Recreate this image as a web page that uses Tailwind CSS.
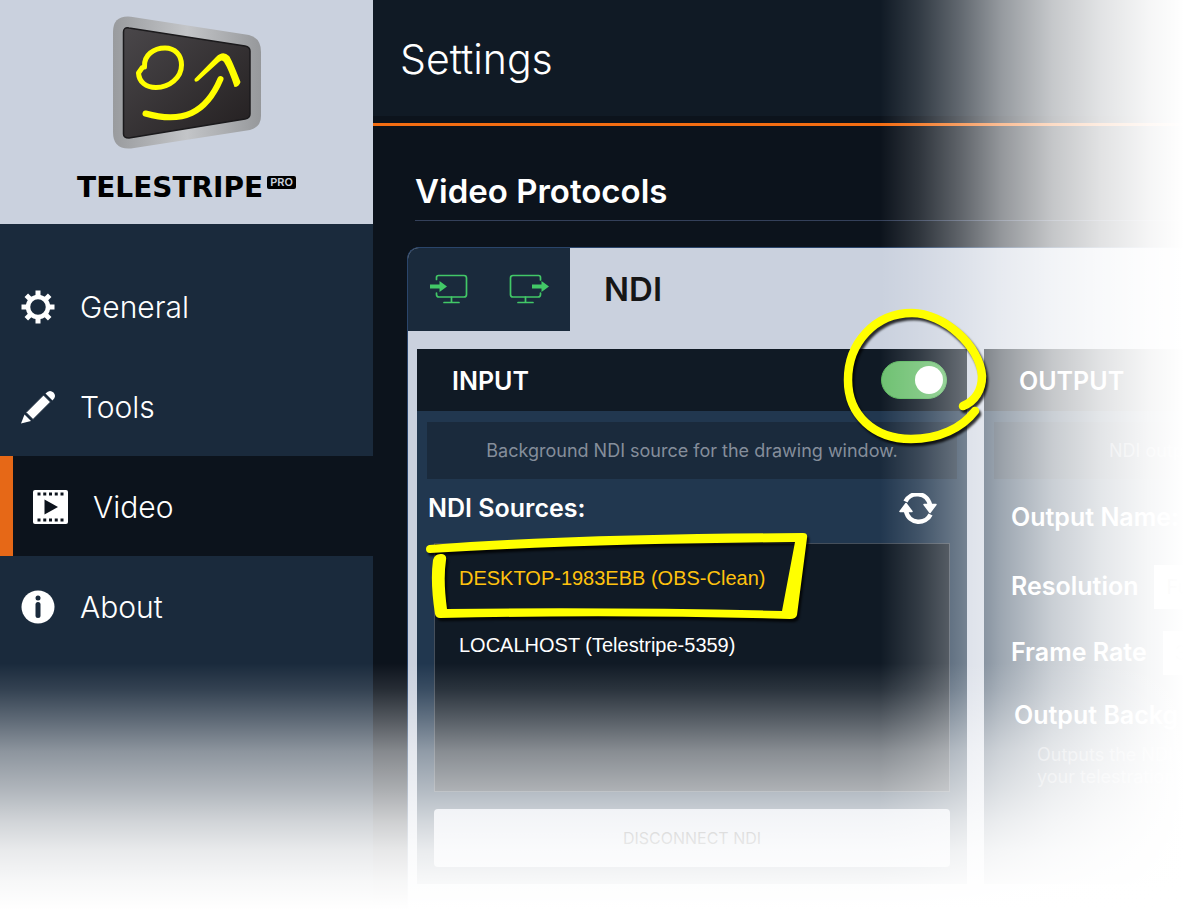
<!DOCTYPE html>
<html lang="en">
<head>
    <meta charset="UTF-8">
    <meta name="viewport" content="width=device-width, initial-scale=1.0">
    <title>Telestripe Pro - Settings</title>
    <script src="https://cdn.jsdelivr.net/npm/@tailwindcss/browser@4"></script>
</head>
<body class="bg-white">
<div class="relative flex h-screen overflow-hidden bg-[#0c131c] font-['Inter',sans-serif] text-white">

    <!-- Sidebar -->
    <aside class="w-[373px] shrink-0 bg-[#1a2a3c]">
        <div class="flex h-[224px] flex-col items-center bg-[#cad1de] pt-4">
            <svg class="h-[134px] w-[150px]" viewBox="112 16 150 134" fill="none" role="img" aria-label="Telestripe logo">
                <defs>
                    <linearGradient id="frame" x1="0" y1="0" x2="1" y2="0">
                        <stop offset="0" stop-color="#999b9e"/>
                        <stop offset=".5" stop-color="#c3c5c8"/>
                        <stop offset="1" stop-color="#96989b"/>
                    </linearGradient>
                    <linearGradient id="screen" x1="0" y1="0" x2="1" y2="1">
                        <stop offset="0" stop-color="#4a474a"/>
                        <stop offset="1" stop-color="#231f20"/>
                    </linearGradient>
                </defs>
                <path d="M113 32Q113 15 131 16.700L249 35Q261 38 261 52V116Q261 127 250 130L131 148.500Q113 150 113 132Z" fill="url(#frame)"/>
                <path d="M123.500 32Q123.500 27 129 28L245 46Q250 47 250 51V114Q250 118 245 119L129 138Q123.500 138 123.500 134Z" fill="url(#screen)" stroke="#1b1a1c" stroke-width="1.500"/>
                <g stroke="#ffff00" stroke-linejoin="round" stroke-linecap="round">
                    <path d="M144.500 67C143.500 55 154 48 165 48C175 48 181.500 55 181.500 65C181.500 78 169 87.500 156 87.500C146 87.500 139 82 138.500 73L142 68" stroke-width="5"/>
                    <path d="M145.500 113.500C183 124 206 113 220.500 79" stroke-width="6"/>
                </g>
                <path d="M194.500 79L216 57Q223 50 229 56Q231 58 240.500 82Q239 87 234.500 87Q229 70 224 62Q222 59 219 62L198 81Q194 83 194.500 79Z" fill="#ffff00"/>
            </svg>
            <div class="mt-[22px] flex items-start gap-1 text-black">
                <span class="font-['DejaVu_Sans',sans-serif] text-[28px] leading-8 font-bold">TELESTRIPE</span>
                <span class="mt-1 rounded-xs bg-black px-[3px] text-[11px] leading-[13px] font-semibold text-[#cad1de]">PRO</span>
            </div>
        </div>
        <nav class="pt-8 text-[30px] font-light">
            <a href="#general" class="flex h-[100px] items-center gap-6 pt-[3px] pl-5">
                <svg class="size-9" viewBox="0 0 36 36" fill="none" stroke="#fff">
                    <circle cx="18" cy="17" r="10" stroke-width="4.500"/>
                    <path d="M18 .500v6M18 27.500v6M1.500 17h6M28.500 17h6M6.300 5.300l4 4M25.700 24.700l4 4M6.300 28.700l4-4M25.700 9.300l4-4" stroke-width="5"/>
                </svg>
                General
            </a>
            <a href="#tools" class="flex h-[100px] items-center gap-6 pt-[3px] pl-5">
                <svg class="size-9" viewBox="0 0 36 36" fill="#fff">
                    <path d="M1 33.500L4.500 24.500L11 31Z"/>
                    <path d="M6 22.500L23.500 5L30.500 12L13 29.500Z" stroke="#1a2a3c" stroke-width="1"/>
                    <path d="M25.500 3.500Q29.500-1 33.500 2.500Q37 6.500 32.500 10.500Z"/>
                </svg>
                Tools
            </a>
            <a href="#video" aria-current="page" class="flex h-[100px] items-center gap-6 border-l-[13px] border-[#e66817] bg-[#0c131c] pt-[3px] pl-5">
                <svg class="size-9" viewBox="0 0 36 36">
                    <rect y="0" width="35" height="34" rx="2" fill="#fff"/>
                    <path d="M4.500 4h26M4.500 30h26" stroke="#0c131c" stroke-width="3" stroke-dasharray="3 2.750"/>
                    <path d="M11.500 9.500L25 17L11.500 24.500Z" fill="#0c131c"/>
                </svg>
                Video
            </a>
            <a href="#about" class="flex h-[100px] items-center gap-6 pt-[3px] pl-5">
                <svg class="size-9" viewBox="0 0 36 36">
                    <circle cx="18" cy="17" r="16.500" fill="#fff"/>
                    <circle cx="18" cy="8" r="2.500" fill="#1a2a3c"/>
                    <path d="M18 14.500v11" stroke="#1a2a3c" stroke-width="5" stroke-linecap="round"/>
                </svg>
                About
            </a>
        </nav>
    </aside>

    <!-- Main -->
    <main class="min-w-0 flex-1">
        <header class="h-[126px] border-b-3 border-[#f46d12]">
            <div class="flex h-[116px] items-center bg-[#101a25] px-[27px] pt-1">
                <h1 class="text-[41px] font-light">Settings</h1>
            </div>
        </header>

        <h2 class="mt-10 ml-[42px] border-b border-[#34405a] pb-1 text-[33px] leading-[50px] font-semibold">Video Protocols</h2>

        <section class="mt-[26px] ml-[34px] overflow-hidden rounded-tl-xl border-t border-l border-[#2a456b] bg-[#cad1de] pb-10">
            <div class="flex h-[83px]">
                <div class="flex w-[162px] items-center justify-center gap-10 bg-[#1a2a3c] pb-[2px]">
                    <svg class="h-8 w-10" viewBox="0 0 40 32" fill="none" stroke="#42c867" stroke-width="1.700" stroke-linecap="round">
                        <path d="M7.500 6.500V4.500Q7.500 2.500 9.500 2.500H35Q37.500 2.500 37.500 5V21.500Q37.500 24 35 24H10Q7.500 24 7.500 21.500V20"/>
                        <path d="M22.500 24v5M15 29.500h15"/>
                        <path d="M1 11.500h9.500V8L18 13.500L10.500 19V15.500H1Z" fill="#42c867" stroke="none"/>
                    </svg>
                    <svg class="h-8 w-10" viewBox="0 0 40 32" fill="none" stroke="#42c867" stroke-width="1.700" stroke-linecap="round">
                        <path d="M31.500 7V4.500Q31.500 2.500 29.500 2.500H4Q1.500 2.500 1.500 5V21.500Q1.500 24 4 24H29Q31.500 24 31.500 21.500V20"/>
                        <path d="M16.500 24v5M9 29.500h15"/>
                        <path d="M23 11.500h9.500V8L40 13.500L32.500 19V15.500H23Z" fill="#42c867" stroke="none"/>
                    </svg>
                </div>
                <h3 class="flex items-center px-[34px] text-[33px] font-semibold text-[#161616]">NDI</h3>
            </div>

            <div class="mt-[18px] ml-[9px] flex h-[535px] gap-[17px]">
                <!-- Input -->
                <div class="w-[550px] shrink-0 bg-[#21374f]">
                    <div class="flex h-[62px] items-center justify-between bg-[#101a25] pr-5 pl-[35px] text-[25px] font-semibold">
                        <label for="ndiInput" class="pt-1">INPUT</label>
                        <input type="checkbox" id="ndiInput" checked class="flex h-[38px] w-[66px] appearance-none items-center justify-end rounded-full border border-[#5cb860] bg-[#6fc172] px-[3px] before:size-7 before:rounded-full before:bg-white">
                    </div>
                    <p class="mx-[10px] mt-[11px] flex h-[57px] items-center justify-center bg-[#1a2a3c] text-lg text-[#858e9b]">Background NDI source for the drawing window.</p>
                    <div class="flex h-16 items-center justify-between pr-[30px] pb-1 pl-[11px]">
                        <h4 class="text-[25px] font-semibold">NDI Sources:</h4>
                        <button type="button" aria-label="Refresh sources">
                            <svg class="h-8 w-[38px]" viewBox="0 0 38 32" fill="none" stroke="#fff" stroke-width="4.500">
                                <path d="M6.500 8.500C11-1.500 28-2 31 12"/>
                                <path d="M31.500 21.500C27 31.500 10 32 7 18"/>
                                <path d="M25 11.500L37 11.500L31 19.500ZM1 18.500H13L7 10.500Z" fill="#fff" stroke="#fff" stroke-width="1.500" stroke-linejoin="round"/>
                            </svg>
                        </button>
                    </div>
                    <ul class="mx-[17px] h-[249px] border border-[#454f5b] bg-[#101a25] pt-px font-['Liberation_Sans',sans-serif] text-[20px] leading-[67px]">
                        <li class="pl-6 text-[#ffc20e]">DESKTOP-1983EBB (OBS-Clean)</li>
                        <li class="pl-6">LOCALHOST (Telestripe-5359)</li>
                    </ul>
                    <div class="mx-[17px] mt-[17px]">
                        <button type="button" class="h-[58px] w-full rounded bg-[#cad1de] text-base text-[#333]">DISCONNECT NDI</button>
                    </div>
                </div>

                <!-- Output -->
                <div class="min-w-0 flex-1 overflow-hidden bg-[#21374f] whitespace-nowrap">
                    <div class="flex h-[62px] items-center bg-[#101a25] pt-1 pl-[35px] text-[25px] font-semibold">OUTPUT</div>
                    <p class="mt-[11px] ml-[10px] flex h-[57px] items-center bg-[#1a2a3c] pl-[115px] text-lg text-[#858e9b]">NDI output</p>
                    <div class="pl-[27px] text-[25px] font-semibold">
                        <div class="mt-2 flex h-[62px] items-center">Output Name:</div>
                        <div class="mt-[7px] flex h-[62px] items-center gap-4">
                            <label for="resolution">Resolution</label>
                            <select id="resolution" class="h-11 w-40 appearance-none bg-white pl-3 text-xl font-normal text-[#333]"><option>Full HD</option></select>
                        </div>
                        <div class="mt-1 flex h-[62px] items-center gap-4">
                            <label for="frameRate">Frame Rate</label>
                            <select id="frameRate" class="h-11 w-40 appearance-none bg-white pl-3 text-xl font-normal text-[#333]"><option>30</option></select>
                        </div>
                        <div class="mt-1 flex h-[56px] items-center pl-[3px]">Output Backg</div>
                    </div>
                    <p class="pl-[53px] text-lg leading-[22px] text-[#858e9b]">Outputs the NDI<br>your telestration</p>
                </div>
            </div>
        </section>
    </main>

    <!-- Page fades -->
    <div class="pointer-events-none absolute inset-y-0 right-0 w-[320px] bg-[linear-gradient(to_right,#fff0,#ffffff24_12%,#ffffff57_25%,#ffffff8f_38%,#ffffffc2_54%,#ffffffe0_69%,#fffffff5_84%,#fff_95%)]"></div>
    <div class="pointer-events-none absolute inset-x-0 bottom-0 h-[260px] bg-[linear-gradient(to_bottom,#fff0,#ffffff1c_10%,#ffffff4d_22%,#ffffff80_34%,#ffffffa8_49%,#ffffffcc_61%,#ffffffe6_72%,#fffffff6_84%,#fff_95%)]"></div>

    <!-- Marker strokes -->
    <svg class="pointer-events-none absolute top-[300px] left-[835px] h-[155px] w-[165px] drop-shadow-[2px_3px_1px_#000c]" viewBox="835 300 165 155" fill="none" stroke="#ffff00" stroke-width="8.500" stroke-linecap="round" stroke-linejoin="round">
        <path d="M963 406C975 401 982 390 982 376C980 346 944 313 912 313C875 313 848 343 848 380C848 415 874 439 911 439C939 439 962 428 975 411"/>
    </svg>
    <svg class="pointer-events-none absolute top-[525px] left-[420px] h-[105px] w-[400px] drop-shadow-[2px_3px_1px_#000c]" viewBox="420 525 400 105" fill="#ffff00">
        <path d="M429 545C550 536 670 534 803 533Q808 533 807 538L797 615Q796 619 790 619Q620 614 440 618Q436 618 435 614Q430 582 433 560Q435 553 442 554Q447 555 446 560Q443 580 447 609Q620 607 782 611L795 542C670 543 550 546 430 553Q426 553 426 549Q426 546 429 545Z"/>
    </svg>
</div>
</body>
</html>
